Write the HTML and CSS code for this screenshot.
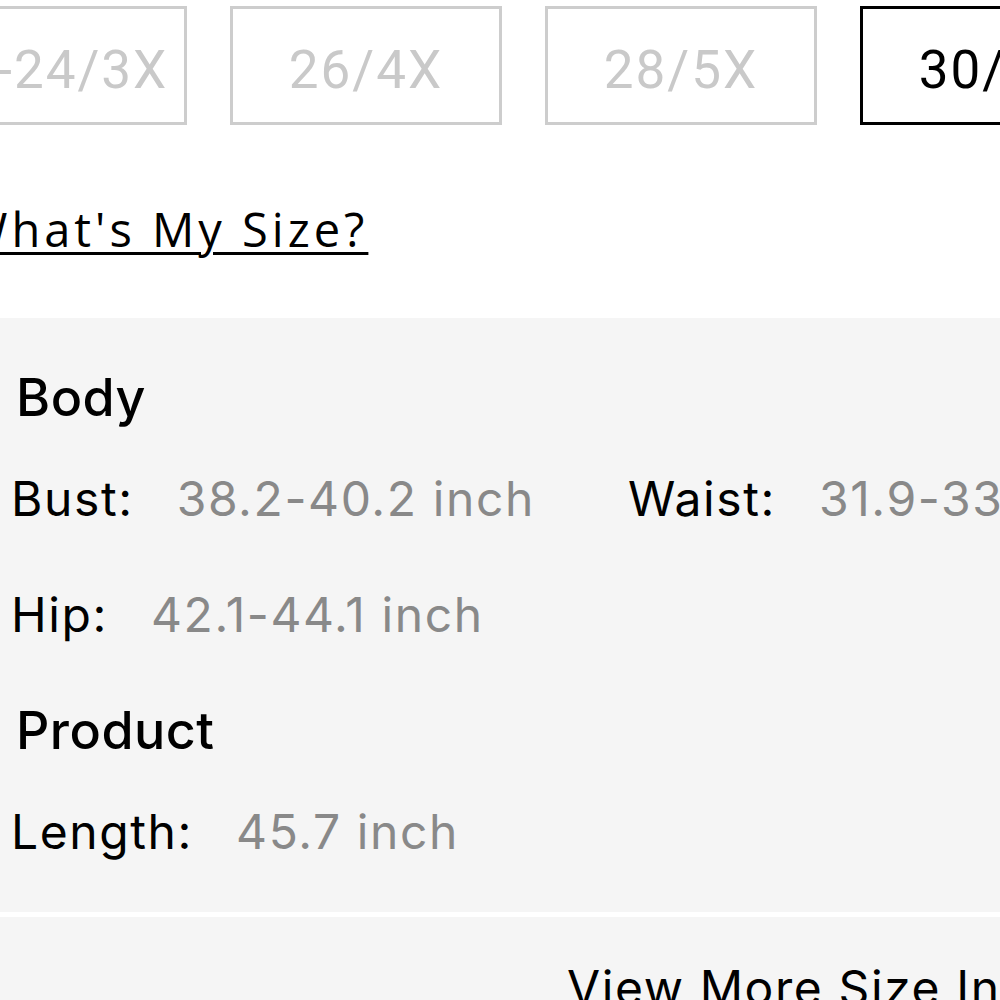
FILE: index.html
```html
<!DOCTYPE html>
<html lang="en">
<head>
<meta charset="utf-8">
<title>Size</title>
<link rel="stylesheet" href="styles.css">
</head>
<body>
<div class="page">
  <div class="sizes">
    <button class="size">22-24/3X</button>
    <button class="size">26/4X</button>
    <button class="size">28/5X</button>
    <button class="size active">30/6X</button>
  </div>
  <a class="size-link" href="#">What's My Size?</a>
  <section class="panel">
    <h3 class="group-title">Body</h3>
    <div class="measure-grid">
      <div class="measure"><span class="label">Bust:</span><span class="value">38.2-40.2 inch</span></div>
      <div class="measure"><span class="label">Waist:</span><span class="value">31.9-33.9 inch</span></div>
      <div class="measure"><span class="label">Hip:</span><span class="value">42.1-44.1 inch</span></div>
    </div>
    <h3 class="group-title">Product</h3>
    <div class="measure-grid last">
      <div class="measure"><span class="label">Length:</span><span class="value">45.7 inch</span></div>
    </div>
  </section>
  <div class="more">
    <span class="more-text">View More Size Info</span>
  </div>
</div>
</body>
</html>
```
FILE: styles.css
```css
html, body {
  margin: 0;
  padding: 0;
  overflow: hidden;
  background: #ffffff;
}

.page {
  width: 1000px;
  font-family: "Inter", "Noto Sans", sans-serif;
  color: #000;
}

.sizes {
  display: flex;
  gap: 43px;
  margin-left: -85px;
  padding-top: 6px;
}

.size {
  flex: none;
  width: 272px;
  height: 119px;
  box-sizing: border-box;
  border: 3px solid #cdcdcd;
  background: #fff;
  display: flex;
  align-items: center;
  justify-content: center;
  padding: 8px 0 0;
  font-family: "Roboto", "Liberation Sans", sans-serif;
  font-size: 53px;
  line-height: 60px;
  letter-spacing: 2px;
  color: #c9c9c9;
  white-space: nowrap;
}

.size.active {
  border-color: #000;
  color: #000;
}

.size-link {
  display: block;
  margin: 76px 0 0 -36px;
  font-family: "Open Sans", "Noto Sans", sans-serif;
  font-size: 47px;
  line-height: 56px;
  letter-spacing: 4px;
  color: #000;
  text-decoration: underline;
  text-decoration-thickness: 3px;
  text-underline-offset: 5px;
  white-space: nowrap;
}

.panel {
  margin-top: 61px;
  background: #f5f5f5;
  padding: 52px 0 52px 11px;
}

.group-title {
  margin: 0 0 45px;
  padding-left: 5px;
  font-size: 52px;
  line-height: 56px;
  font-weight: 500;
  letter-spacing: 0.5px;
}

.measure-grid {
  display: grid;
  grid-template-columns: 617px 1fr;
  row-gap: 60px;
  margin-bottom: 60px;
}

.measure-grid.last {
  margin-bottom: 0;
}

.measure {
  display: flex;
  gap: 43px;
  font-size: 48px;
  line-height: 56px;
  letter-spacing: 1.6px;
  white-space: nowrap;
}

.label {
  color: #000;
}

.value {
  color: #898989;
}

.more {
  margin-top: 5px;
  background: #f5f5f5;
  height: 200px;
  padding-left: 567px;
  padding-top: 43px;
  box-sizing: border-box;
}

.more-text {
  font-size: 48px;
  line-height: 56px;
  letter-spacing: 1.6px;
  white-space: nowrap;
}
```
